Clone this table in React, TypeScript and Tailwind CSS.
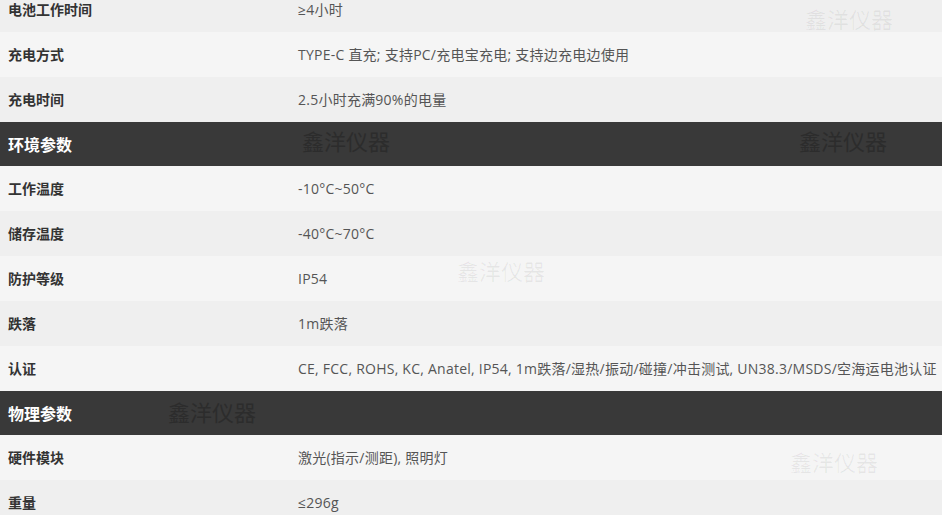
import React from "react";

type Row = { type: "row"; label: string; value: string } | { type: "head"; label: string };

const rows: Row[] = [
  { type: "row", label: "电池工作时间", value: "≥4小时" },
  { type: "row", label: "充电方式", value: "TYPE-C 直充; 支持PC/充电宝充电; 支持边充电边使用" },
  { type: "row", label: "充电时间", value: "2.5小时充满90%的电量" },
  { type: "head", label: "环境参数" },
  { type: "row", label: "工作温度", value: "-10°C~50°C" },
  { type: "row", label: "储存温度", value: "-40°C~70°C" },
  { type: "row", label: "防护等级", value: "IP54" },
  { type: "row", label: "跌落", value: "1m跌落" },
  { type: "row", label: "认证", value: "CE, FCC, ROHS, KC, Anatel, IP54, 1m跌落/湿热/振动/碰撞/冲击测试, UN38.3/MSDS/空海运电池认证" },
  { type: "head", label: "物理参数" },
  { type: "row", label: "硬件模块", value: "激光(指示/测距), 照明灯" },
  { type: "row", label: "重量", value: "≤296g" },
];

const bgs = ["bg-[#efefef]", "bg-[#f5f5f5]"];

const marks: string[] = [
  "left-[805px] top-[7px] text-[rgba(0,0,0,0.06)]",
  "left-[302px] top-[129px] text-[#2c2c2c]",
  "left-[799px] top-[129px] text-[#2c2c2c]",
  "left-[457px] top-[259px] text-[rgba(0,0,0,0.06)]",
  "left-[168px] top-[400px] text-[#2c2c2c]",
  "left-[790px] top-[450px] text-[rgba(0,0,0,0.06)]",
];

export default function App() {
  let idx = 0;
  return (
    <div className="relative w-[942px] h-[515px] overflow-hidden bg-white font-['Open_Sans','Noto_Sans_CJK_SC',sans-serif]">
      <div className="mt-[-13px] flex flex-col">
        {rows.map((r, i) => {
          if (r.type === "head") {
            idx = 1;
            return (
              <div
                key={i}
                className="h-[44px] flex items-center bg-[#393939] pl-[8px] text-white font-bold text-[16px] font-['Noto_Sans_CJK_SC',sans-serif]"
              >
                {r.label}
              </div>
            );
          }
          const bg = bgs[idx % 2];
          idx++;
          return (
            <div key={i} className={`h-[45px] flex items-center ${bg}`}>
              <div className="w-[290px] shrink-0 pl-[8px] text-[14px] font-bold text-[#333333] font-['Noto_Sans_CJK_SC',sans-serif]">
                {r.label}
              </div>
              <div className="pl-[8px] text-[14px] tracking-[0.24px] text-[#555555] whitespace-nowrap">{r.value}</div>
            </div>
          );
        })}
      </div>
      {marks.map((m, i) => (
        <div
          key={i}
          className={`absolute text-[22px] leading-none whitespace-nowrap pointer-events-none font-['Noto_Sans_CJK_SC',serif] ${m}`}
        >
          鑫洋仪器
        </div>
      ))}
    </div>
  );
}
